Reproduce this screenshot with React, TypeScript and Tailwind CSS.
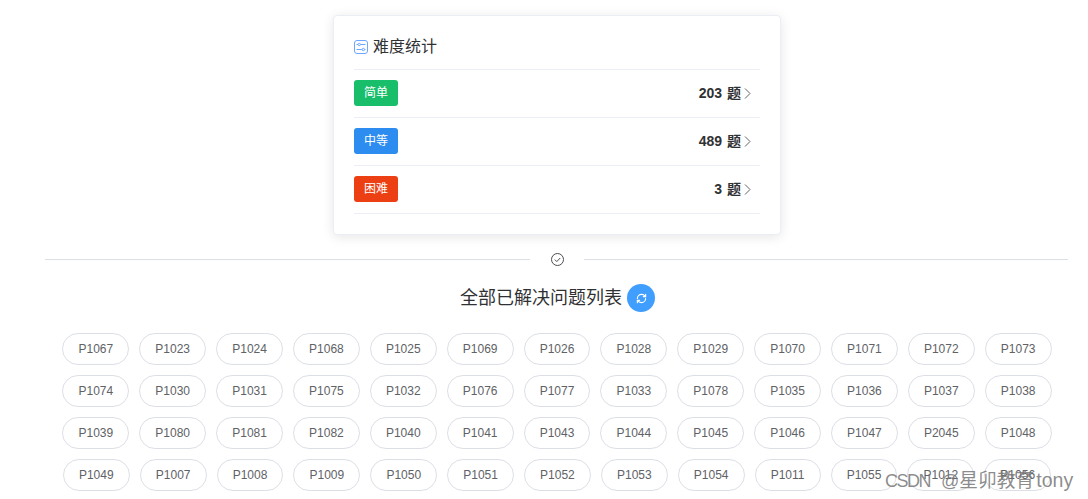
import { RefreshCw } from "lucide-react";

const FONT = '"Liberation Sans", "Noto Sans CJK SC", sans-serif';

const levels = [
  { label: "简单", count: 203, color: "bg-[#19be6b]" },
  { label: "中等", count: 489, color: "bg-[#2d8cf0]" },
  { label: "困难", count: 3, color: "bg-[#ed3f14]" },
];

const problems = [
  "P1067", "P1023", "P1024", "P1068", "P1025", "P1069", "P1026", "P1028", "P1029", "P1070", "P1071", "P1072", "P1073",
  "P1074", "P1030", "P1031", "P1075", "P1032", "P1076", "P1077", "P1033", "P1078", "P1035", "P1036", "P1037", "P1038",
  "P1039", "P1080", "P1081", "P1082", "P1040", "P1041", "P1043", "P1044", "P1045", "P1046", "P1047", "P2045", "P1048",
  "P1049", "P1007", "P1008", "P1009", "P1050", "P1051", "P1052", "P1053", "P1054", "P1011", "P1055", "P1012", "P1056",
];

function SlidersIcon() {
  return (
    <svg width="14" height="14" viewBox="0 0 14 14" fill="none" stroke="#6ea6ff" strokeWidth="1" aria-hidden="true">
      <rect x="0.5" y="0.5" width="13" height="13" rx="2.5" />
      <path d="M2.5 4.5h1.5M6.5 4.5h5M2.5 9.5H8M10.5 9.5h1" />
      <circle cx="5.2" cy="4.5" r="1.2" />
      <circle cx="9.3" cy="9.5" r="1.2" />
    </svg>
  );
}

export default function App() {
  return (
    <div className="relative h-[499px] overflow-hidden bg-white pl-[45px] pr-[20px] pt-[15px]" style={{ fontFamily: FONT }}>
      <div className="ml-[288px] h-[220px] w-[448px] rounded border border-[#ebeef5] bg-white px-5 pt-[15px] shadow-[0_2px_12px_0_rgba(0,0,0,0.1)]">
        <div className="flex h-[38px] items-center gap-[5px] pb-[6px] text-[#303133]">
          <SlidersIcon />
          <span className="text-[16px]">难度统计</span>
        </div>
        {levels.map((level) => (
          <div key={level.label} className="flex h-[48px] items-center justify-between border-t border-[#ebeef5] last:h-[49px] last:border-b">
            <span className={`flex h-[26px] w-[44px] -translate-y-px items-center justify-center rounded-[3px] text-[12px] text-white ${level.color}`}>
              {level.label}
            </span>
            <span className="flex items-center gap-[3px] pr-[9px] text-[14px] font-bold text-[#303133] [word-spacing:1px]">
              {level.count} 题
              <svg width="7" height="11" viewBox="0 0 7 11" fill="none" stroke="#606266" strokeWidth="1" aria-hidden="true">
                <path d="M1 0.5l5 5-5 5" />
              </svg>
            </span>
          </div>
        ))}
      </div>

      <div className="mt-[18px] flex items-center">
        <div className="h-px w-[485px] bg-[#dcdfe6]" />
        <div className="flex w-[54px] justify-center">
          <svg width="13" height="13" viewBox="0 0 13 13" fill="none" stroke="#4a4d52" strokeWidth="1" aria-hidden="true">
            <circle cx="6.5" cy="6.5" r="6" />
            <path d="M3.8 6.6l2 2 3.4-3.6" />
          </svg>
        </div>
        <div className="h-px flex-1 bg-[#dcdfe6]" />
      </div>

      <div className="mt-[18px] flex h-[28px] items-center justify-center gap-[5px] pl-[2px]">
        <span className="text-[18px] text-[#303133]">全部已解决问题列表</span>
        <span className="flex h-[28px] w-[28px] items-center justify-center rounded-full bg-[#409eff]">
          <RefreshCw size={11} strokeWidth={2.5} className="text-white" />
        </span>
      </div>

      <div className="mt-[16px] flex flex-wrap justify-center pl-px">
        {problems.map((id) => (
          <span key={id} className="m-[5px] rounded-full border border-[#dcdfe6] px-[15.08px] py-[8px] text-[12px] leading-[14px] text-[#606266]">
            {id}
          </span>
        ))}
      </div>

      <div className="absolute left-[885px] top-[469px] whitespace-nowrap text-[18px] leading-[22px] text-[#777777]/85">
        <span className="tracking-[-1.5px]">CSDN</span>
        <span className="ml-[11px]">@</span>
        <span className="text-[18.75px]">星卯教育</span>
        <span className="ml-[2px] text-[19.5px]">tony</span>
      </div>
    </div>
  );
}
